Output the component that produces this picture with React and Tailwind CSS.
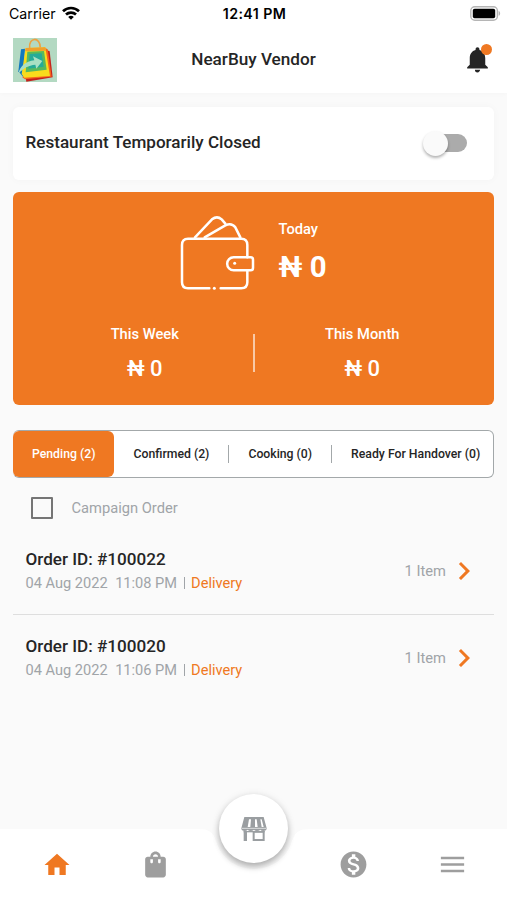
import { useState } from "react";
import {
    MdChevronRight,
    MdHome,
    MdMenu,
    MdMonetizationOn,
    MdNotifications,
    MdShoppingBag,
} from "react-icons/md";

const tabs = ["Pending (2)", "Confirmed (2)", "Cooking (0)", "Ready For Handover (0)"];

const orders = [
    { id: "100022", date: "04 Aug 2022", time: "11:08 PM", type: "Delivery", items: 1 },
    { id: "100020", date: "04 Aug 2022", time: "11:06 PM", type: "Delivery", items: 1 },
];

function App() {
    const [activeTab, setActiveTab] = useState(0);

    return (
        <div className="w-[507px] h-[900px] flex flex-col overflow-hidden bg-[#fafafa] text-[#252525] font-['Roboto','Noto_Sans',sans-serif]">
            <Header />

            <main className="flex-1 min-h-0 px-[13px] pt-[14px]">
                <section className="h-[73px] pl-[12.5px] pr-[27px] pb-px flex items-center justify-between bg-white rounded-[6px] shadow-[0_0_8px_rgba(0,0,0,0.03)]">
                    <h2 className="text-[17.1px] font-medium">Restaurant Temporarily Closed</h2>
                    <div className="w-[44px] h-[25px] flex items-center">
                        <div className="w-[25px] h-[25px] shrink-0 rounded-full bg-[#fafafa] shadow-[0_2px_3px_rgba(0,0,0,0.3)] z-10" />
                        <div className="w-[32px] h-[18px] -ml-[13px] rounded-r-full bg-[#ababab]" />
                    </div>
                </section>

                <Earnings />

                <div className="mt-[25px] h-[48px] flex bg-white border-y border-r border-[#a3a8aa] rounded-[6px]">
                    {tabs.map((tab, i) => (
                        <div key={tab} className="flex items-center">
                            {i > 1 && <div className="w-px h-[18px] bg-[#a3a8aa]" />}
                            <button
                                onClick={() => setActiveTab(i)}
                                className={`h-[46px] px-[19px] rounded-[6px] text-[12.25px] font-medium whitespace-nowrap ${
                                    activeTab === i ? "bg-[#ef7822] text-white" : ""
                                }`}
                            >
                                {tab}
                            </button>
                        </div>
                    ))}
                </div>

                <label className="mt-[19px] ml-[18px] h-[22px] flex items-center gap-[18.5px] text-[14.7px] text-[#a0a4a8]">
                    <span className="w-[22px] h-[22px] border-2 border-[#757575] rounded-[1px]" />
                    Campaign Order
                </label>

                <div className="mt-[9px]">
                    {orders.map((order) => (
                        <OrderRow key={order.id} order={order} />
                    ))}
                </div>
            </main>

            <BottomNav />
        </div>
    );
}

function Header() {
    return (
        <header className="h-[93px] shrink-0 bg-white shadow-[0_0_6px_rgba(0,0,0,0.03)]">
            <div className="h-[27px] pl-[9px] pr-[6px] grid grid-cols-3 items-center text-black font-['Inter',sans-serif]">
                <div className="flex items-center gap-[6px] text-[14.2px]">
                    Carrier
                    <svg width="18" height="14" viewBox="0 0 18 14" fill="none" stroke="#000" strokeWidth="2.7">
                        <path d="M1 5.2C5.5.9 12.5.9 17 5.2" />
                        <path d="M4 8.6c2.8-2.6 7.2-2.6 10 0" />
                        <path d="M9 13.7 6.2 10.9c1.5-1.4 4.1-1.4 5.6 0z" fill="#000" stroke="none" />
                    </svg>
                </div>
                <div className="pr-[1px] pt-[1px] text-center text-[14.2px] font-semibold tracking-[0.4px] whitespace-nowrap">12:41 PM</div>
                <svg className="justify-self-end -mt-[1px]" width="31" height="15" viewBox="0 0 31 15">
                    <rect x="0.8" y="0.8" width="26.6" height="13.4" rx="4" fill="#fff" stroke="#b5b5b5" strokeWidth="1.4" />
                    <rect x="2.8" y="2.8" width="22.4" height="9.4" rx="1.8" fill="#000" />
                    <path d="M28.6 5c2 .6 2 4.2 0 4.8z" fill="#b5b5b5" />
                </svg>
            </div>
            <div className="h-[66px] px-[13px] flex items-center justify-between">
                <Logo />
                <h1 className="text-[17.15px] font-medium">NearBuy Vendor</h1>
                <div className="relative w-[44px] flex justify-center pl-[12px] pb-[2px]">
                    <MdNotifications size={31} />
                    <span className="absolute right-[1.5px] top-0 w-[11px] h-[11px] rounded-full bg-[#ef7822]" />
                </div>
            </div>
        </header>
    );
}

function Logo() {
    return (
        <svg width="44" height="44" viewBox="0 0 132 132">
            <rect width="132" height="132" fill="#b3d9c2" />
            <path d="M24 34 36 32 30 116 16 100z" fill="#1279bd" />
            <path d="M100 36 110 40 119 118 40 131 38 119z" fill="#c4201c" />
            <path d="M92 28 104 34 116 116 36 124 28 118z" fill="#f5641d" />
            <path d="M38 30 97 28 111 114 34 119 26 108z" fill="#f9dc1c" />
            <path d="M38 30 97 28 99 38 36 40z" fill="#f0a02c" />
            <path d="M43 41 93 39 101 95 38 103z" fill="#57b95e" />
            <path d="M50 48 86 46 92 86 46 92z" fill="#26ab98" />
            <path d="M50 30C46-4 82-4 82 29" fill="none" stroke="#eca243" strokeWidth="5" />
            <path d="M17 106C20 86 38 70 64 67L60 55 88 69 70 92 67 80C46 82 32 90 17 106z" fill="#a9e0c4" />
        </svg>
    );
}

function Earnings() {
    return (
        <section className="mt-[12px] h-[213px] pt-[22px] flex flex-col bg-[#ef7822] rounded-[6px] text-white">
            <div className="h-[80px] pl-[167px] flex gap-[22.5px]">
                <WalletIcon />
                <div className="pt-[6px]">
                    <div className="text-[14.7px] leading-[18px] font-medium">Today</div>
                    <div className="mt-[11px] text-[29.4px] leading-[36px] font-bold">₦ 0</div>
                </div>
            </div>
            <div className="mt-[31px] px-[24px] flex items-start">
                <Amount label="This Week" />
                <div className="mt-[9px] w-[2px] h-[38px] bg-white/60" />
                <Amount label="This Month" />
            </div>
        </section>
    );
}

function Amount({ label }) {
    return (
        <div className="flex-1 text-center font-medium">
            <div className="text-[14.7px] leading-[18px]">{label}</div>
            <div className="mt-[13px] text-[22px] leading-[26px]">₦ 0</div>
        </div>
    );
}

function WalletIcon() {
    return (
        <svg className="mt-[1px]" width="76" height="76" viewBox="60 44 228 228" fill="none" stroke="#fff" strokeWidth="7.5" strokeLinecap="round" strokeLinejoin="round">
            <path d="M148 264H84Q66 264 66 246V134Q66 115 84 115H244Q262 115 262 134V171" />
            <path d="M262 210V246Q262 264 244 264H182" />
            <path d="M221 171H272Q279 171 279 178V203Q279 210 272 210H221A19.5 19.5 0 0 1 221 171z" />
            <path d="M105 111 156 57Q171 45 185 57L196 70" />
            <path d="M134 111 196 75Q215 66 226 81L241 111" />
            <circle cx="163" cy="264" r="4.5" fill="#fff" stroke="none" />
            <circle cx="224" cy="189" r="4.5" fill="#fff" stroke="none" />
        </svg>
    );
}

function OrderRow({ order }) {
    return (
        <div className="h-[87px] pl-[12.5px] pr-[12px] flex items-center justify-between border-b border-[#dedede] last:h-[86px] last:border-0">
            <div>
                <div className="text-[17.1px] leading-[24px] font-medium">Order ID: #{order.id}</div>
                <div className="flex items-center text-[14.6px] leading-[24px] text-[#a0a4a8]">
                    {order.date}
                    <span className="ml-[7.5px]">{order.time}</span>
                    <span className="mx-[6.5px] w-px h-[12px] bg-[#a0a4a8]" />
                    <span className="text-[#ef7822]">{order.type}</span>
                </div>
            </div>
            <div className="flex items-center text-[14.7px] text-[#a0a4a8]">
                {order.items} Item
                <MdChevronRight size={36} className="text-[#ef7822]" />
            </div>
        </div>
    );
}

function BottomNav() {
    return (
        <nav className="relative h-[71px] shrink-0 bg-white pl-[7px] pr-[5px] grid grid-cols-5 items-center justify-items-center text-[#9e9e9e]">
            {/* notch under the floating store button */}
            <svg className="absolute left-[198px] top-0" width="112" height="42" viewBox="0 0 112 42">
                <path d="M0 0C11 0 15 3 18 12C23 29 38 40 56 40S89 29 94 12C97 3 101 0 112 0z" fill="#fafafa" />
            </svg>
            <MdHome size={30} className="text-[#ef7822]" />
            <MdShoppingBag size={31} />
            <button className="absolute left-[219px] -top-[35px] w-[69px] h-[69px] flex items-center justify-center rounded-full bg-white shadow-[0_4px_6px_rgba(0,0,0,0.25),0_1px_8px_rgba(0,0,0,0.1)]">
                <StoreIcon />
            </button>
            <span />
            <MdMonetizationOn size={31} />
            <MdMenu size={31} />
        </nav>
    );
}

function StoreIcon() {
    return (
        <svg width="26" height="24" viewBox="0 0 78 72" fill="#9a9ea1">
            <path d="M10 0H68L77 34Q77 42 67 42Q60 42 58 38Q54 42 48 42T39 38Q35 42 29 42T20 38Q17 42 11 42Q1 42 1 34z" />
            <path d="M24 7H30L28 30H20zM42 7H47L50 30H42zM58 7H62L68 30H62z" fill="#fff" />
            <path d="M3 34H75" stroke="#fff" strokeWidth="2" />
            <path d="M8 42H18V72H8z" />
            <path d="M35 42H71V72H35zM41 47V66H65V47z" fillRule="evenodd" />
            <path d="M8 42H71V46H8z" />
        </svg>
    );
}

export default App;
